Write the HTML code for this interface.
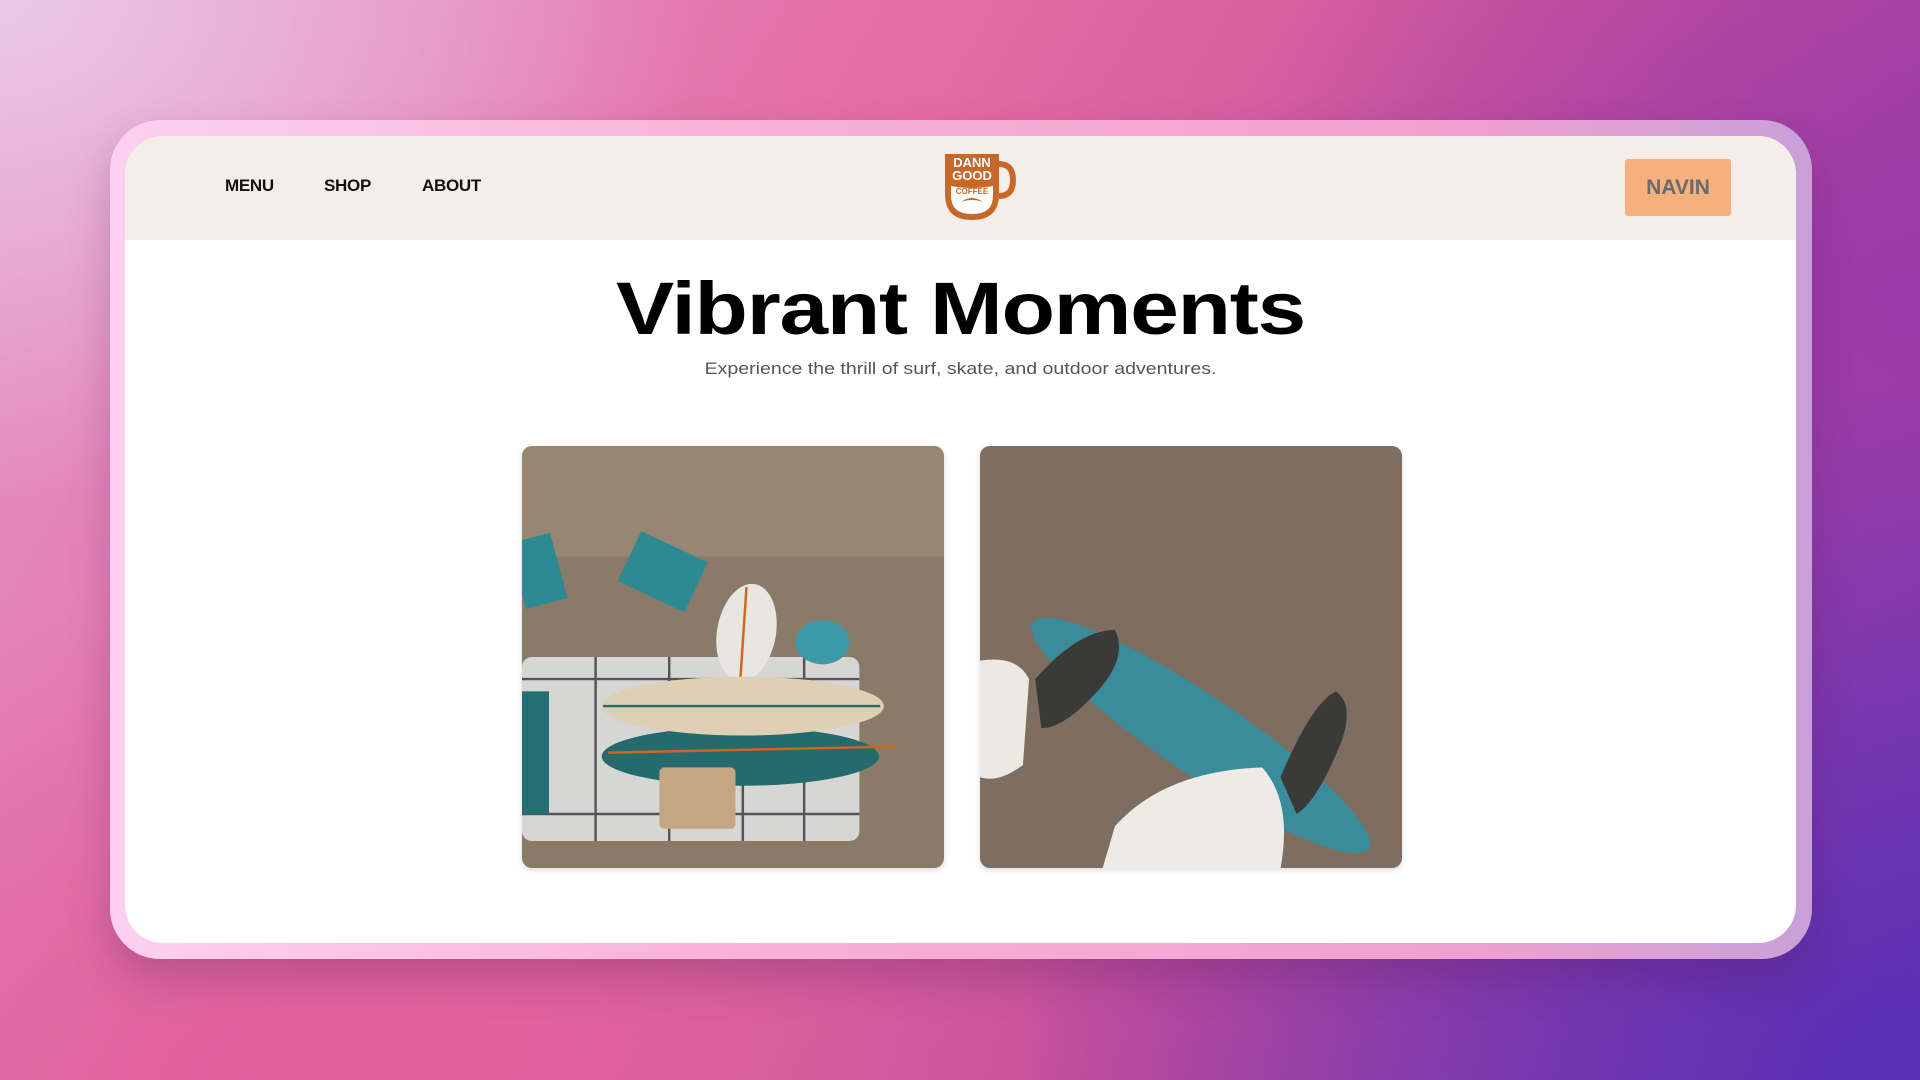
<!DOCTYPE html>
<html><head><meta charset="utf-8"><style>
*{margin:0;padding:0;box-sizing:border-box}
html,body{width:1920px;height:1080px;overflow:hidden}
body{position:relative;font-family:"Liberation Sans",sans-serif;
background:
radial-gradient(ellipse 700px 500px at 0px 0px,#ecc8e6 0%,rgba(236,200,230,0) 100%),
radial-gradient(ellipse 900px 700px at 1920px 1080px,#5a2fb4 0%,rgba(90,47,180,0) 100%),
radial-gradient(ellipse 700px 600px at 1920px 300px,#9a3aa8 0%,rgba(154,58,168,0) 100%),
radial-gradient(ellipse 800px 500px at 300px 1080px,#e0609c 0%,rgba(224,96,156,0) 100%),
linear-gradient(120deg,#e394c8 0%,#e46aa2 40%,#c04c9c 70%,#7a38b0 100%);}
.outer{position:absolute;left:110px;top:120px;width:1702px;height:839px;border-radius:50px;
background:linear-gradient(90deg,#fcd0f0,#f8b0d4 40%,#f0a0d0 80%,#c8a0d8);box-shadow:0 20px 40px rgba(80,20,80,.25)}
.inner{position:absolute;left:125px;top:136px;width:1671px;height:807px;border-radius:38px;background:#fff;overflow:hidden}
.head{position:absolute;left:0;top:0;width:100%;height:104px;background:#f5eee8}
.nav{position:absolute;top:40px;font-weight:bold;font-size:17px;color:#111;letter-spacing:-0.3px}
.btn{position:absolute;left:1500px;top:23px;width:106px;height:57px;background:#f5b07e;border-radius:3px;color:#6a6a6a;font-weight:bold;font-size:21px;text-align:center;line-height:57px}
h1{position:absolute;left:0;width:100%;top:130px;text-align:center;font-size:74px;font-weight:900;color:#000;letter-spacing:-1px;transform:scaleX(1.18)}
.sub{position:absolute;left:0;width:100%;top:223px;text-align:center;font-size:17px;color:#555;transform:scaleX(1.15)}
.img{position:absolute;top:310px;width:422px;height:422px;border-radius:10px;overflow:hidden;box-shadow:0 2px 6px rgba(0,0,0,.15)}
</style></head><body>
<div class="outer"></div>
<div class="inner">
<div class="head">
<div class="nav" style="left:100px">MENU</div>
<div class="nav" style="left:199px">SHOP</div>
<div class="nav" style="left:297px">ABOUT</div>
<svg style="position:absolute;left:816px;top:14px" width="76" height="74" viewBox="0 0 76 74">
<path d="M4 4 H58 V44 Q58 70 31 70 Q4 70 4 44 Z" fill="#c8672a"/>
<path d="M58 14 Q72 14 72 30 Q72 46 58 46" fill="none" stroke="#c8672a" stroke-width="6"/>
<path d="M10 36 Q31 40 52 36 V46 Q52 64 31 64 Q10 64 10 46 Z" fill="#fff"/>
<path d="M20 52 Q31 44 42 52 Q31 48 20 52Z" fill="#c8672a"/>
<text x="31" y="17" text-anchor="middle" font-family="Liberation Sans" font-weight="bold" font-size="13" fill="#fff">DANN</text>
<text x="31" y="30" text-anchor="middle" font-family="Liberation Sans" font-weight="bold" font-size="13" fill="#fff">GOOD</text>
<text x="31" y="44" text-anchor="middle" font-family="Liberation Sans" font-weight="bold" font-size="8" fill="#c8672a">COFFEE</text>
</svg>
<div class="btn">NAVIN</div>
</div>
<h1>Vibrant Moments</h1>
<div class="sub">Experience the thrill of surf, skate, and outdoor adventures.</div>
<div class="img" style="left:397px">
<svg width="422" height="422" viewBox="0 0 344 344">
<rect width="344" height="344" fill="#8a7b69"/>
<rect width="344" height="90" fill="#a09078" opacity=".6"/>
<g fill="#2e8a92"><rect x="-5" y="75" width="35" height="55" transform="rotate(-15 10 100)"/><rect x="85" y="80" width="60" height="45" transform="rotate(25 115 102)"/></g>
<rect x="0" y="172" width="275" height="150" rx="8" fill="#d6d6d4"/>
<g stroke="#555" stroke-width="2" fill="none"><path d="M0 190H275M0 300H275M60 172V322M120 172V322M180 172V322M230 172V322"/></g>
<rect x="0" y="200" width="22" height="100" fill="#246f74"/>
<ellipse cx="183" cy="152" rx="24" ry="40" fill="#e8e6e0" transform="rotate(10 183 152)"/>
<line x1="183" y1="115" x2="178" y2="190" stroke="#d0661e" stroke-width="2"/>
<ellipse cx="245" cy="160" rx="22" ry="18" fill="#3c9aa6"/>
<ellipse cx="178" cy="253" rx="113" ry="24" fill="#256a6c"/>
<line x1="70" y1="250" x2="305" y2="245" stroke="#d0661e" stroke-width="2"/>
<ellipse cx="180" cy="212" rx="115" ry="24" fill="#ddd0b4"/>
<line x1="66" y1="212" x2="292" y2="212" stroke="#256a6c" stroke-width="2"/>
<rect x="112" y="262" width="62" height="50" rx="4" fill="#c4a683"/>
</svg></div>
<div class="img" style="left:855px">
<svg width="422" height="422" viewBox="0 0 344 344">
<rect width="344" height="344" fill="#7e6e62"/>
<ellipse cx="180" cy="236" rx="165" ry="32" fill="#3a8c9b" transform="rotate(34 180 236)"/>
<path d="M0 175 Q30 170 40 190 L35 260 Q15 275 0 270Z" fill="#ece8e2"/>
<path d="M110 310 Q150 265 230 262 Q255 290 245 344 H100Z" fill="#eeeae4"/>
<path d="M45 190 Q80 150 110 150 Q120 170 100 195 Q70 230 50 230Z" fill="#3a3a38"/>
<path d="M245 270 Q270 210 290 200 Q305 210 295 240 Q275 290 258 300Z" fill="#3a3a38"/>
</svg></div>
</div>
</body></html>
